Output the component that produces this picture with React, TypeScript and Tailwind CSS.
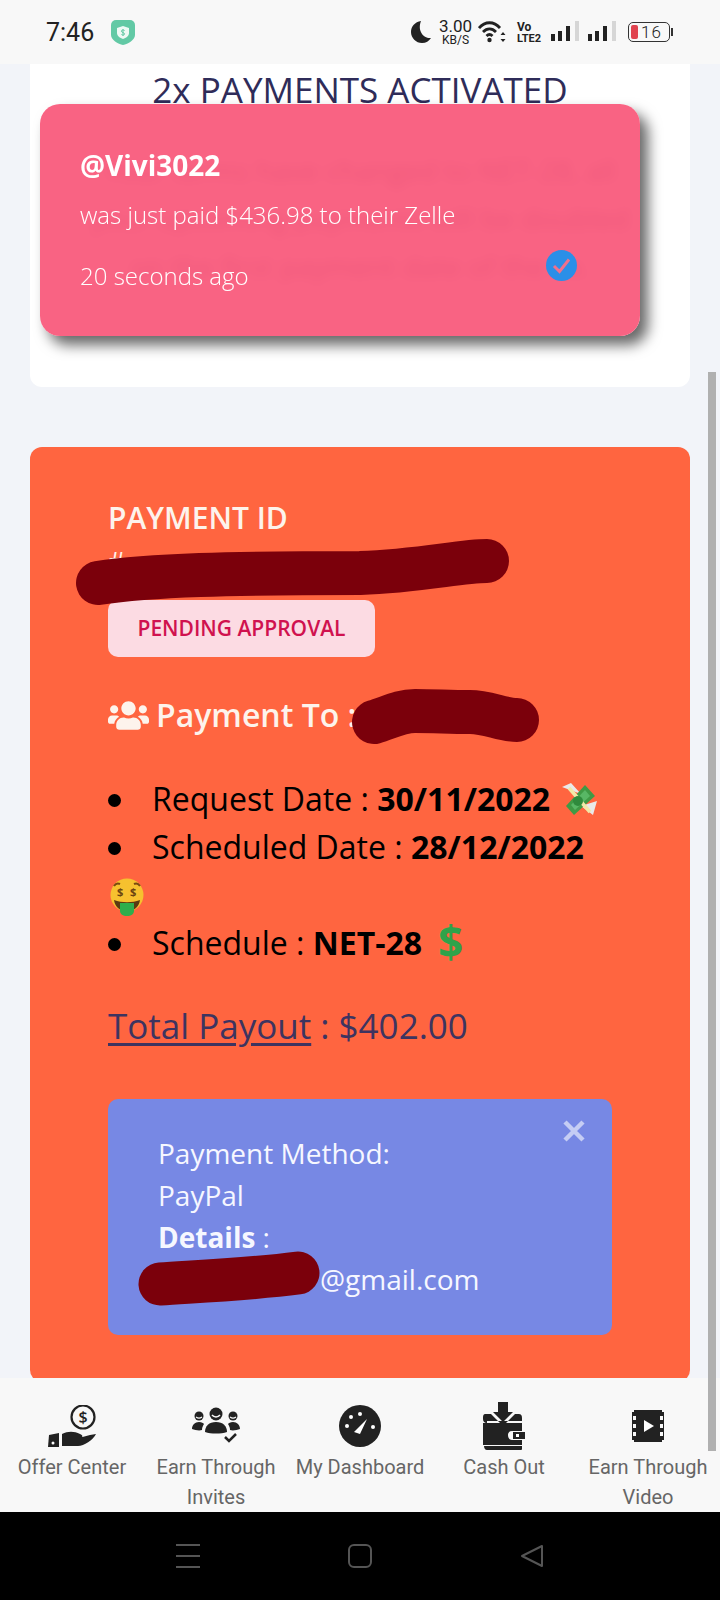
import { FaUsers } from "react-icons/fa";

function StatusBar() {
  return (
    <div className="h-16 shrink-0 bg-[#f8f8f8] flex items-center pl-[46px] pr-[47px] text-[#222]">
      <span className="text-[25px] font-['Roboto',sans-serif] leading-none">7:46</span>
      <svg className="ml-[17px]" width="24" height="25" viewBox="0 0 24 25">
        <path d="M5 0h14a5 5 0 0 1 5 5v10c0 5-7 9-12 10C7 24 0 20 0 15V5a5 5 0 0 1 5-5z" fill="#62c9a5" />
        <path d="M12 6l6 2v5c0 3-3 5-6 6-3-1-6-3-6-6V8z" fill="#eef9f5" />
        <path d="M12 9v7M10.400 14.500c1 .8 3.200.8 3.200-.6s-3.200-1.200-3.200-2.800c0-1.200 2-1.400 3.200-.6" stroke="#62c9a5" strokeWidth="1" fill="none" />
      </svg>
      <div className="ml-auto flex items-center">
        <svg width="21" height="24" viewBox="0 0 21 24">
          <path d="M11 1C5 2 1 6.500 1 12c0 6 5 11 11 11 4 0 7-2 9-5-7 1-14-7-10-17z" fill="#222" />
        </svg>
        <div className="ml-2 w-[33px] flex flex-col items-center font-['Roboto',sans-serif]">
          <span className="text-[17px] leading-[15px]">3.00</span>
          <span className="text-[12px] leading-[12px]">KB/S</span>
        </div>
        <svg className="ml-[6px]" width="28" height="24" viewBox="0 0 28 24">
          <path d="M1 8C7 1 16 1 22 8M5 12c4-4 9-4 13 0M8.500 16c2-2 4-2 6 0" stroke="#222" strokeWidth="2.800" fill="none" />
          <circle cx="11.500" cy="20" r="2.200" fill="#222" />
          <path d="M25 12l-2.500 3h5zM25 22l-2.500-3h5z" fill="#222" />
        </svg>
        <div className="ml-[11px] w-6 flex flex-col items-start font-['Roboto',sans-serif] font-bold">
          <span className="text-[12px] leading-[12px]">Vo</span>
          <span className="text-[11px] leading-[11px]">LTE2</span>
        </div>
        <Signal className="ml-[10px]" />
        <Signal className="ml-2" />
        <div className="ml-[11px] w-[42px] h-5 border-[1.5px] border-[#333] rounded-[5px] flex items-center pl-[2px]">
          <span className="w-[7px] h-[14px] rounded-[2px] bg-[#e0434f]" />
          <span className="ml-[3px] text-[17px] leading-none font-['Roboto',sans-serif] font-light tracking-[1px]">16</span>
        </div>
        <span className="ml-[1px] w-[2px] h-2 bg-[#333]" />
      </div>
    </div>
  );
}

function Signal({ className }: { className: string }) {
  return (
    <svg className={className} width="29" height="22" viewBox="0 0 29 22">
      <rect x="0" y="13" width="4" height="7" fill="#222" />
      <rect x="7" y="10" width="4" height="10" fill="#222" />
      <rect x="15" y="5" width="4" height="15" fill="#222" />
      <rect x="24" y="0" width="4" height="20" fill="#d6d6d6" />
    </svg>
  );
}

function Toast() {
  return (
    <div className="absolute left-[40px] top-[40px] w-[600px] h-[232px] rounded-[20px] bg-[#f95b7c]/95 backdrop-blur-[6px] shadow-[8px_9px_14px_rgba(0,0,0,0.6)] pl-10 pt-[43px] text-white">
      <p className="text-[28px] leading-[36px] font-bold">@Vivi3022</p>
      <p className="mt-[14px] text-[24px] leading-[36px] font-light">was just paid $436.98 to their Zelle</p>
      <p className="mt-[25px] text-[24px] leading-[36px] font-light">20 seconds ago</p>
      <svg className="absolute left-[506px] top-[146px]" width="31" height="31" viewBox="0 0 31 31">
        <circle cx="15.500" cy="15.500" r="15.500" fill="#2a8fe8" />
        <path d="M8 16l5.500 5.500L23 9.500" stroke="#f0708c" strokeWidth="3" fill="none" />
      </svg>
    </div>
  );
}

function MoneyWings() {
  return (
    <svg className="inline-block ml-[11px] align-[-5px]" width="36" height="34" viewBox="0 0 36 34">
      <path d="M1 5l9-4 10 11zM20 24l12 9 4-14z" fill="#e9e9e9" />
      <path d="M5 24L24 3l10 11-21 19z" fill="#3f9a45" />
      <path d="M10 23L24 8l5 6-15 14z" fill="#58b765" />
      <path d="M8 6l21 24" stroke="#f2e8a8" strokeWidth="3.500" />
      <circle cx="17" cy="19" r="5" fill="#2f8a3c" />
    </svg>
  );
}

function MoneyFace() {
  return (
    <svg className="inline-block align-[-9px]" width="38" height="38" viewBox="0 0 38 38">
      <circle cx="19" cy="17" r="16.500" fill="#f6c12f" />
      <path d="M6 8c2-3 4-3 6-2M26 6c2-1 4-1 6 2" stroke="#7a4a10" strokeWidth="2" fill="none" />
      <text x="9" y="18" fontSize="11" fontWeight="700" fill="#6b4310" fontFamily="Open Sans, sans-serif">$</text>
      <text x="22" y="18" fontSize="11" fontWeight="700" fill="#6b4310" fontFamily="Open Sans, sans-serif">$</text>
      <path d="M6 22c8 3 18 3 26 0-1 8-7 11-13 11S7 30 6 22z" fill="#5b3a12" />
      <path d="M12 25h14v8c0 3-3 5-7 5s-7-2-7-5z" fill="#2fae4c" />
    </svg>
  );
}

function Bullet() {
  return (
    <span className="inline-block w-[44px] align-[4px]">
      <span className="block w-[13px] h-[13px] rounded-full bg-black" />
    </span>
  );
}

function PaymentCard() {
  return (
    <div className="relative mt-[60px] h-[935px] rounded-[12px] bg-[#ff6540] pl-[78px] pr-[78px] pt-[52px]">
      <p className="text-[30px] leading-[38px] font-semibold text-[#fdf3ec]">PAYMENT ID</p>
      <p className="h-[63px] text-[27px] leading-[50px] text-[#fdf3ec]">#</p>
      <div className="w-[267px] h-[57px] rounded-[10px] bg-[#fcdbe3] flex items-center justify-center text-[21px] font-semibold text-[#d0124f]">
        PENDING APPROVAL
      </div>
      <div className="mt-[36px] flex items-center text-[32px] leading-[44px] font-semibold text-[#fdf3ec]">
        <FaUsers className="mr-[7px]" size={41} />
        Payment To :
      </div>
      <ul className="mt-[38px] text-[32px] leading-[48px] text-black">
        <li>
          <Bullet />
          Request Date : <b>30/11/2022</b>
          <MoneyWings />
        </li>
        <li>
          <Bullet />
          Scheduled Date : <b>28/12/2022</b>
          <br />
          <MoneyFace />
        </li>
        <li>
          <Bullet />
          Schedule : <b>NET-28</b>
          <span className="ml-[16px] font-bold text-[#2fa34a] text-[44px] leading-[0] align-[-3px]">$</span>
        </li>
      </ul>
      <p className="mt-[35px] text-[35px] leading-[48px] font-medium text-[#3d3460]">
        <span className="underline underline-offset-4">Total Payout</span> : $402.00
      </p>
      <div className="relative mt-[49px] w-[504px] h-[236px] rounded-[10px] bg-[#7788e4] pl-[50px] pt-[33px] text-[28px] leading-[42px] text-[#f6f7ff]">
        <p>Payment Method:</p>
        <p>PayPal</p>
        <p>
          <b>Details</b> :
        </p>
        <p>
          <span className="inline-block w-[162px]" />
          @gmail.com
        </p>
        <svg className="absolute right-[27px] top-[21px]" width="22" height="22" viewBox="0 0 22 22">
          <path d="M2 2l18 18M20 2L2 20" stroke="#c5cdf4" strokeWidth="4.500" />
        </svg>
      </div>
      {/* redaction scribbles */}
      <svg className="absolute left-0 top-0 pointer-events-none" width="660" height="935" viewBox="0 0 660 935">
        <path d="M68 136C120 128 200 126 330 126 390 124 430 114 457 114" stroke="#7b000b" strokeWidth="44" strokeLinecap="round" fill="none" />
        <path d="M344 275c14-4 26-11 41-11 20 0 34 1 55 1 18 0 32 8 47 8" stroke="#7b000b" strokeWidth="44" strokeLinecap="round" fill="none" />
        <path d="M130 837c46-3 92-5 138-11" stroke="#7b000b" strokeWidth="43" strokeLinecap="round" fill="none" />
      </svg>
    </div>
  );
}

function OfferIcon() {
  return (
    <svg width="48" height="43" viewBox="0 0 48 43">
      <circle cx="35" cy="12" r="11.500" fill="none" stroke="#222" strokeWidth="2.200" />
      <text x="35" y="18" textAnchor="middle" fontSize="16" fontWeight="600" fill="#222" fontFamily="Open Sans, sans-serif">$</text>
      <path d="M1 30l10-2v14H0z" fill="#222" />
      <path d="M14 29c6-3 12-3 18 0 3 1 3 3 1 4l-6 1 15-4 6-1c-3 6-12 12-18 12H14z" fill="#222" />
      <circle cx="5" cy="38" r="1.500" fill="#fff" />
    </svg>
  );
}

function InvitesIcon() {
  return (
    <svg width="48" height="38" viewBox="0 0 48 38">
      <circle cx="24" cy="7" r="6.500" fill="#222" />
      <path d="M20 8c2 2.500 6 2.500 8 0" stroke="#f8f8f8" strokeWidth="1.500" fill="none" />
      <path d="M13 25c0-6 4-10 11-10s11 4 11 10c-6 2-16 2-22 0z" fill="#222" />
      <circle cx="7" cy="9" r="4.500" fill="#222" />
      <path d="M4 10c2 1.500 4 1.500 6 0" stroke="#f8f8f8" strokeWidth="1.200" fill="none" />
      <path d="M0 22c0-4 3-7 7-7 3 0 4 1 5 2-1 2-2 3-2 6-3 1-7 0-10-1z" fill="#222" />
      <circle cx="41" cy="9" r="4.500" fill="#222" />
      <path d="M38 10c2 1.500 4 1.500 6 0" stroke="#f8f8f8" strokeWidth="1.200" fill="none" />
      <path d="M48 22c0-4-3-7-7-7-3 0-4 1-5 2 1 2 2 3 2 6 3 1 7 0 10-1z" fill="#222" />
      <path d="M33 30l4 4 7-7" stroke="#222" strokeWidth="2.500" fill="none" />
    </svg>
  );
}

function DashIcon() {
  return (
    <svg width="42" height="42" viewBox="0 0 42 42">
      <circle cx="21" cy="21" r="21" fill="#222" />
      <path d="M15 27l13-13-7 15z" fill="#fff" />
      <g fill="#fff">
        <circle cx="21" cy="9" r="2" />
        <circle cx="12" cy="12" r="2" />
        <circle cx="8" cy="21" r="2" />
        <circle cx="34" cy="22" r="2" />
      </g>
    </svg>
  );
}

function CashIcon() {
  return (
    <svg width="42" height="48" viewBox="0 0 42 48">
      <path d="M15 0h10v10h5L20 20 10 10h5z" fill="#222" />
      <path d="M2 12h6l10 10h4l10-10h4c3 0 3 3 3 4v3H4v2c-3 0-4-2-4-4v-2c0-2 1-3 2-3z" fill="#222" />
      <path d="M0 21h39v8H29c-3 0-4 2-4 4s1 5 4 5h10v5H0z" fill="#222" />
      <path d="M30 30h12v7H30z" fill="#222" />
      <rect x="33" y="32" width="3" height="3" fill="#fff" />
      <path d="M1 44h38v3c0 1-1 1-2 1H4c-2 0-3-2-3-4z" fill="#222" />
    </svg>
  );
}

function FilmIcon() {
  return (
    <svg width="32" height="32" viewBox="0 0 32 32">
      <rect width="32" height="32" rx="2" fill="#222" />
      <path d="M12 10l10 6-10 6z" fill="#fff" />
      <g fill="#f8f8f8">
        <rect x="1" y="6" width="3" height="4" />
        <rect x="1" y="14" width="3" height="4" />
        <rect x="1" y="22" width="3" height="4" />
        <rect x="28" y="6" width="3" height="4" />
        <rect x="28" y="14" width="3" height="4" />
        <rect x="28" y="22" width="3" height="4" />
        <rect x="0" y="0" width="2" height="2" />
        <rect x="30" y="0" width="2" height="2" />
        <rect x="0" y="30" width="2" height="2" />
        <rect x="30" y="30" width="2" height="2" />
      </g>
    </svg>
  );
}

const navItems = [
  { label: "Offer Center", icon: <OfferIcon /> },
  { label: "Earn Through Invites", icon: <InvitesIcon /> },
  { label: "My Dashboard", icon: <DashIcon /> },
  { label: "Cash Out", icon: <CashIcon /> },
  { label: "Earn Through Video", icon: <FilmIcon /> },
];

export default function App() {
  return (
    <div className="relative w-[720px] h-[1600px] overflow-hidden flex flex-col bg-[#f2f4f9] font-['Open_Sans',sans-serif]">
      <StatusBar />

      <div className="relative flex-1 overflow-hidden px-[30px]">
        {/* Notice card */}
        <div className="h-[323px] bg-white rounded-b-[12px] px-[50px] pt-[3px] text-center text-[#2f2c59]">
          <h2 className="text-[35px] leading-[46px] font-medium -mx-5">2x PAYMENTS ACTIVATED</h2>
          <p className="mt-[33px] text-[28px] leading-[48px]">
            Your terms have changed to NET-28, all your upcoming payments will be doubled on the first payment date of the 2x.
          </p>
        </div>
        <PaymentCard />
        <Toast />
      </div>

      {/* Bottom nav */}
      <div className="relative h-[134px] shrink-0 bg-[#f8f8f8] grid grid-cols-5">
        {navItems.map((item) => (
          <div key={item.label} className="flex flex-col items-center text-center">
            <div className="h-[76px] flex items-center justify-center pt-[20px]">{item.icon}</div>
            <span className="mt-[-2px] w-[130px] text-[20px] leading-[30px] text-[#666] font-['Roboto',sans-serif]">
              {item.label}
            </span>
          </div>
        ))}
      </div>

      {/* Android nav */}
      <div className="h-[88px] shrink-0 bg-black flex items-center justify-center gap-[148px]">
        <div className="w-6 h-[24px] flex flex-col justify-between">
          <span className="h-[2px] bg-[#555]" />
          <span className="h-[2px] bg-[#555]" />
          <span className="h-[2px] bg-[#555]" />
        </div>
        <div className="w-6 h-6 rounded-[6px] border-2 border-[#555]" />
        <svg width="24" height="24" viewBox="0 0 24 24">
          <path d="M22 2v20L2 12z" stroke="#555" strokeWidth="2" strokeLinejoin="round" fill="none" />
        </svg>
      </div>

      {/* Scrollbar */}
      <div className="absolute left-[708px] top-[372px] w-2 h-[1079px] bg-[#b0b0b0]" />
    </div>
  );
}
